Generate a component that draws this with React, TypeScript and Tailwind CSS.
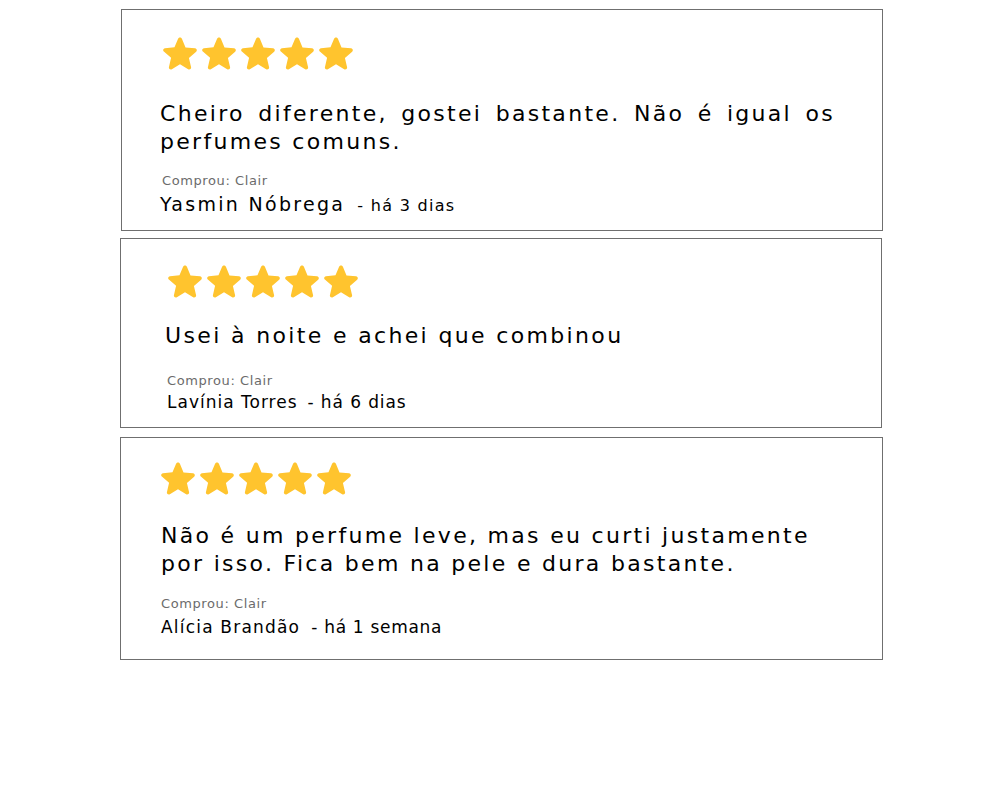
import React from "react";

const Star = () => (
  <svg viewBox="3.35 3.45 17.3 16.6" className="w-[34px] h-[33px] shrink-0" aria-hidden="true">
    <path
      fill="#FFC42E"
      d="M12 17.27l4.15 2.51c.76.46 1.69-.22 1.49-1.08l-1.1-4.72 3.67-3.18c.67-.58.31-1.68-.57-1.75l-4.83-.41-1.89-4.46c-.34-.81-1.5-.81-1.84 0L9.19 8.63l-4.83.41c-.88.07-1.24 1.17-.57 1.75l3.67 3.18-1.1 4.72c-.2.86.73 1.54 1.49 1.08l4.15-2.5z"
    />
  </svg>
);

const Stars = ({ className }: { className: string }) => (
  <div className={"flex gap-[5px] " + className}>
    <Star />
    <Star />
    <Star />
    <Star />
    <Star />
  </div>
);

const font = { fontFamily: "'DejaVu Sans', sans-serif" };

export default function App() {
  return (
    <div className="w-[1000px] h-[800px] bg-white text-black" style={font}>
      {/* Card 1 */}
      <div className="ml-[121px] mt-[9px] w-[762px] h-[222px] border border-[#6f6f6f] pl-[38px] pt-[27px]">
        <Stars className="ml-[3px]" />
        <p className="mt-[30px] w-[675px] text-[22px] leading-[28px] tracking-[2.3px] text-justify">
          Cheiro diferente, gostei bastante. Não é igual os perfumes comuns.
        </p>
        <p className="mt-[16px] ml-[2px] text-[13px] leading-[18px] tracking-[0.6px] text-[#6b6b6b]">Comprou: Clair</p>
        <p className="mt-[2px] flex items-baseline">
          <span className="text-[19px] leading-[24px] tracking-[2.3px]">Yasmin Nóbrega</span>
          <span className="ml-[12px] text-[16px] tracking-[1.3px]">- há 3 dias</span>
        </p>
      </div>

      {/* Card 2 */}
      <div className="ml-[120px] mt-[7px] w-[762px] h-[190px] border border-[#6f6f6f] pl-[44px] pt-[26px]">
        <Stars className="ml-[3px]" />
        <p className="mt-[24px] text-[22px] leading-[28px] tracking-[2.35px]">Usei à noite e achei que combinou</p>
        <p className="mt-[22px] ml-[2px] text-[13px] leading-[18px] tracking-[0.6px] text-[#6b6b6b]">Comprou: Clair</p>
        <p className="mt-0 ml-[2px] flex items-baseline">
          <span className="text-[17px] leading-[22px] tracking-[1px]">Lavínia Torres</span>
          <span className="ml-[10px] text-[17px] tracking-[0.9px]">- há 6 dias</span>
        </p>
      </div>

      {/* Card 3 */}
      <div className="ml-[120px] mt-[9px] w-[763px] h-[223px] border border-[#6f6f6f] pl-[40px] pt-[24px]">
        <Stars className="" />
        <p className="mt-[27px] w-[675px] text-[22px] leading-[28px] tracking-[2.3px]">
          Não é um perfume leve, mas eu curti justamente por isso. Fica bem na pele e dura bastante.
        </p>
        <p className="mt-[17px] text-[13px] leading-[18px] tracking-[0.6px] text-[#6b6b6b]">Comprou: Clair</p>
        <p className="mt-[2px] flex items-baseline">
          <span className="text-[17px] leading-[22px] tracking-[1.2px]">Alícia Brandão</span>
          <span className="ml-[11px] text-[17px] tracking-[0.7px]">- há 1 semana</span>
        </p>
      </div>
    </div>
  );
}
